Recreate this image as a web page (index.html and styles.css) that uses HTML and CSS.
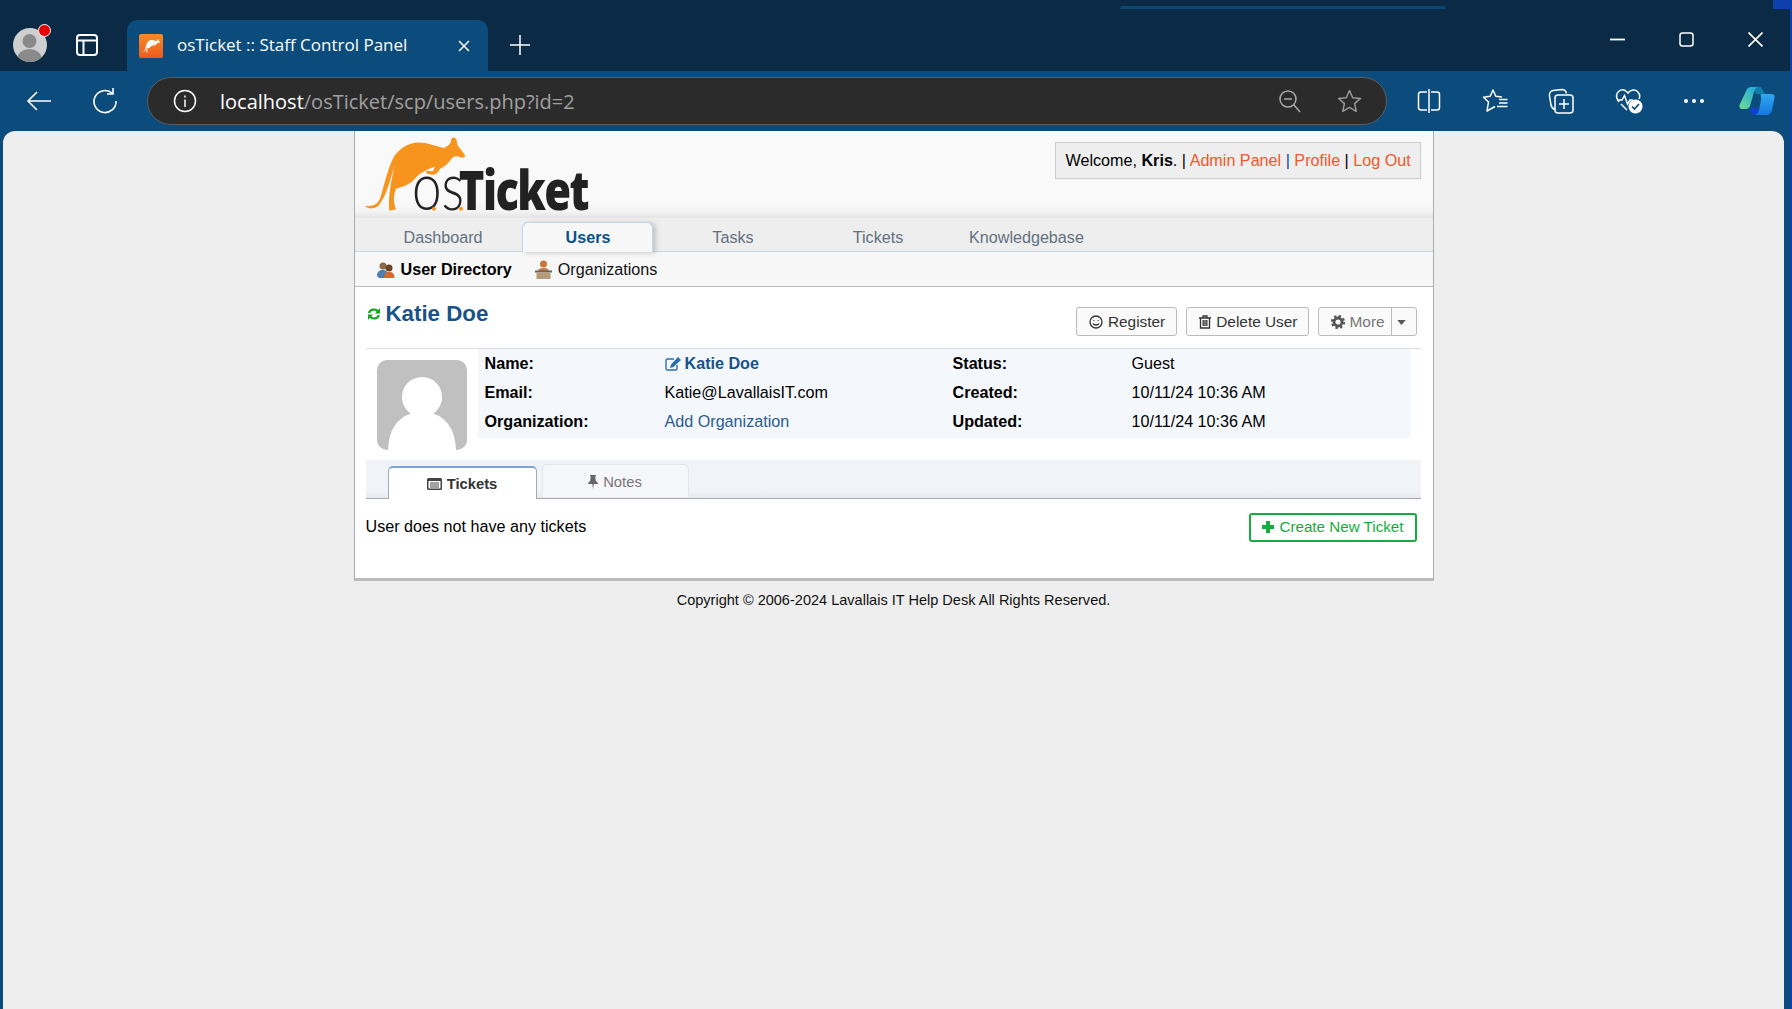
FILE: index.html
```html
<!DOCTYPE html>
<html lang="en">
<head>
<meta charset="utf-8">
<title>osTicket :: Staff Control Panel</title>
<link rel="stylesheet" href="styles.css">
</head>
<body>
<div class="desk-corner"></div>
<div class="window">
  <div class="tabstrip">
    <div class="sliver"></div>
    <div class="avatar-btn">
      <svg width="36" height="36" viewBox="0 0 36 36"><defs><clipPath id="pc"><circle cx="18" cy="18" r="17"/></clipPath></defs><circle cx="18" cy="18" r="17" fill="#cfcfcf"/><g clip-path="url(#pc)" fill="#8a8a8a"><circle cx="17.500" cy="14" r="7"/><ellipse cx="17.500" cy="31" rx="12" ry="9"/></g></svg>
      <span class="notify"></span>
    </div>
    <svg class="tabs-ico" width="22" height="22" viewBox="0 0 22 22" fill="none" stroke="#fff" stroke-width="2"><rect x="1" y="1" width="20" height="20" rx="3"/><path d="M1 6.500H21M7.500 6.500V21"/></svg>
    <div class="tab">
      <span class="favicon">
        <svg width="20" height="15" viewBox="0 0 330 245"><path fill="#fff" d="M15 222C35 224 52 218 60 200C70 170 78 130 92 95C105 60 130 38 165 32C195 28 225 42 252 48C262 42 268 38 272 32C272 22 276 14 284 17C290 20 291 28 292 38C300 50 310 60 316 72C312 78 304 78 296 74C290 72 282 72 276 78C268 92 255 104 240 110C234 122 228 128 215 128L198 124L200 116L218 118C222 112 224 108 224 104C200 112 175 125 165 140C150 158 125 165 108 170C100 190 100 210 108 232L88 236C84 200 92 150 104 100C92 135 82 190 55 222C40 232 25 232 15 222Z"/></svg>
      </span>
      <span class="tab-title">osTicket :: Staff Control Panel</span>
      <svg class="tab-close" width="12" height="12" viewBox="0 0 12 12" stroke="#fff" stroke-width="1.500"><path d="M1 1L11 11M11 1L1 11"/></svg>
    </div>
    <svg class="newtab" width="20" height="20" viewBox="0 0 20 20" stroke="#fff" stroke-width="1.500"><path d="M10 0V20M0 10H20"/></svg>
    <div class="winctrls">
      <svg width="15" height="15" viewBox="0 0 15 15" stroke="#fff" stroke-width="1.800"><path d="M0 7.500H15"/></svg>
      <svg width="15" height="15" viewBox="0 0 15 15" fill="none" stroke="#fff" stroke-width="1.500"><rect x="1" y="1" width="13" height="13" rx="2.500"/></svg>
      <svg width="15" height="15" viewBox="0 0 15 15" stroke="#fff" stroke-width="1.600"><path d="M.5 .5L14.500 14.500M14.500 .5L.5 14.500"/></svg>
    </div>
  </div>
  <div class="toolbar">
    <svg class="t-back" width="26" height="22" viewBox="0 0 26 22" fill="none" stroke="#fff" stroke-width="1.600"><path d="M25 11H2M11 2L2 11L11 20"/></svg>
    <svg class="t-reload" width="26" height="26" viewBox="0 0 26 26" fill="none" stroke="#fff" stroke-width="1.600"><path d="M20.500 5.500A11 11 0 1 0 24 13"/><path d="M21 0V6H15"/></svg>
    <div class="address">
      <svg class="a-info" width="24" height="24" viewBox="0 0 24 24" fill="none" stroke="#fff" stroke-width="1.500"><circle cx="12" cy="12" r="10.500"/><path d="M12 10.500V18M12 6.500V8.500"/></svg>
      <span class="url"><span class="url-host">localhost</span>/osTicket/scp/users.php?id=2</span>
      <svg class="a-zoom" width="22" height="23" viewBox="0 0 22 23" fill="none" stroke="#aaa" stroke-width="1.500"><circle cx="9" cy="9" r="8"/><path d="M5 9H13M15 15L21 22"/></svg>
      <svg class="a-star" width="25" height="24" viewBox="0 0 25 24" fill="none" stroke="#999" stroke-width="1.500" stroke-linejoin="round"><path d="M12.500 1.500L15.700 8.700L23.500 9.400L17.600 14.600L19.300 22.300L12.500 18.300L5.700 22.300L7.400 14.600L1.500 9.400L9.300 8.700Z"/></svg>
    </div>
    <div class="tools">
      <svg width="24" height="26" viewBox="0 0 24 26" fill="none" stroke="#fff" stroke-width="1.500"><path d="M10 4H4A2.500 2.500 0 0 0 1.500 6.500V19.500A2.500 2.500 0 0 0 4 22H10M14 4H20A2.500 2.500 0 0 1 22.500 6.500V19.500A2.500 2.500 0 0 1 20 22H14M12 1V25"/></svg>
      <svg width="26" height="26" viewBox="0 0 26 26" fill="none" stroke="#fff" stroke-width="1.500" stroke-linejoin="round"><path d="M20 9L13.800 8.300L11 2L8.200 8.300L1.500 9.200L6.500 14L5 23L13 18.500"/><path d="M17 11.500H25.500M17 15H25.500M15 18.500H25.500"/></svg>
      <svg width="26" height="26" viewBox="0 0 26 26" fill="none" stroke="#fff" stroke-width="1.500"><path d="M7 21.500C5 21 3.500 19.500 3 17L1.500 8C1 5 3 3 5 2.500L14 1.500C16.500 1.500 18 3 18.500 5.500"/><rect x="7" y="7" width="18" height="18" rx="3"/><path d="M16 11V21M11 16H21"/></svg>
      <svg width="28" height="26" viewBox="0 0 28 26"><path fill="none" stroke="#fff" stroke-width="1.500" d="M4 14C1 10 1 6 3.500 3.500C6.500 1 10 1.500 13 5C16 1.500 20 1 22.500 3.500C25 6 25 9 24 11M2 12H7L9.500 7.500L12.500 16L15 12H18M6 16L12 22"/><circle cx="20.500" cy="18.500" r="7" fill="#fff"/><path d="M17 18.500L19.500 21L24 16" fill="none" stroke="#0b4c7d" stroke-width="1.700"/></svg>
      <svg width="22" height="6" viewBox="0 0 22 6" fill="#fff"><circle cx="3" cy="3" r="2"/><circle cx="11" cy="3" r="2"/><circle cx="19" cy="3" r="2"/></svg>
    </div>
    <svg class="copilot" width="36" height="30" viewBox="0 0 36 30"><defs><linearGradient id="cg1" x1="0" y1="1" x2="1" y2="0"><stop offset="0" stop-color="#6fdc8c"/><stop offset="1" stop-color="#1aa3e8"/></linearGradient><linearGradient id="cg2" x1="0" y1="0" x2="0" y2="1"><stop offset="0" stop-color="#2fa8ef"/><stop offset="1" stop-color="#1576e0"/></linearGradient></defs><path fill="#0e7fa8" d="M13 1H22L26 8H17Z"/><path fill="url(#cg1)" d="M8 3C9 1.500 11 1 13 1H20C17 1 16 3 15 6L11 20C10.500 22.500 8 23 6 23H3C1 23 0 21 .5 19Z"/><path fill="#1340c8" d="M11 22H20L18 29H14C12 29 11 26 11 22Z"/><path fill="url(#cg2)" d="M22 8H32C35 8 36 10 35.500 12L33 24C32.500 27 30 29 27 29H15C18 29 19 27 20 24L22 14C22.500 11 21 9 22 8Z"/></svg>
  </div>
  <div class="viewport">
    <div class="page">
      <header class="head">
        <svg class="logo" width="240" height="100" viewBox="0 0 720 300" role="img" aria-label="osTicket">
          <path class="roo" d="M15 222C35 224 52 218 60 200C70 170 78 130 92 95C105 60 130 38 165 32C195 28 225 42 252 48C262 42 268 38 272 32C272 22 276 14 284 17C290 20 291 28 292 38C300 50 310 60 316 72C312 78 304 78 296 74C290 72 282 72 276 78C268 92 255 104 240 110C234 122 228 128 215 128L198 124L200 116L218 118C222 112 224 108 224 104C200 112 175 125 165 140C150 158 125 165 108 170C100 190 100 210 108 232L88 236C84 200 92 150 104 100C92 135 82 190 55 222C40 232 25 232 15 222Z"/>
          <text class="logo-text" x="156" y="234" textLength="528" lengthAdjust="spacingAndGlyphs"><tspan class="logo-os">os</tspan><tspan class="logo-ticket" dx="-20">Ticket</tspan></text>
          <circle class="roo" cx="222" cy="230" r="6"/><circle class="roo" cx="303" cy="230" r="6"/>
        </svg>
        <div class="welcome">Welcome, <b>Kris</b>. | <a class="lnk">Admin Panel</a> <span class="pipe">|</span> <a class="lnk">Profile</a> | <a class="lnk">Log Out</a></div>
      </header>
      <nav class="nav">
        <a class="nav-item">Dashboard</a>
        <a class="nav-item active">Users</a>
        <a class="nav-item">Tasks</a>
        <a class="nav-item">Tickets</a>
        <a class="nav-item">Knowledgebase</a>
      </nav>
      <div class="subnav">
        <a class="sub-item strong">
          <svg width="18" height="18" viewBox="0 0 18 18"><circle cx="6" cy="5" r="3.500" fill="#8a6a4a"/><path fill="#4d7fb5" d="M0 15C0 10 3 9 6 9C9 9 11 11 11 15L9 17H2Z"/><circle cx="12" cy="7" r="3.500" fill="#6a4424"/><path fill="#d9662a" d="M7 17C7 12 9 11 12 11C15 11 17.500 12 17.500 17Z"/></svg>
          User Directory</a>
        <a class="sub-item">
          <svg width="17" height="19" viewBox="0 0 17 19"><circle cx="8.500" cy="4" r="3.500" fill="#c8763a"/><path fill="#c8763a" d="M3 11C3 9 5 8 8.500 8C12 8 14 9 14 11Z"/><rect x="0" y="10.500" width="17" height="2" fill="#666"/><rect x="1.500" y="12.500" width="14" height="6.500" fill="#b59a7a"/></svg>
          Organizations</a>
      </div>
      <main class="content">
        <div class="title-row">
          <h2 class="title">
            <svg width="14" height="14" viewBox="0 0 14 14" fill="none" stroke="#17a51f" stroke-width="2.200"><path d="M2 6A5 4.500 0 0 1 11 4.500M12 8A5 4.500 0 0 1 3 9.500"/><path fill="#17a51f" stroke="none" d="M13 1V6.500H8ZM1 13V7.500H6Z"/></svg>
            <span>Katie Doe</span>
          </h2>
          <div class="actions">
            <a class="btn btn-reg">
              <svg width="14" height="14" viewBox="0 0 14 14" fill="none" stroke="#333" stroke-width="1.300"><circle cx="7" cy="7" r="6"/><path d="M4 8.500C5 10.500 9 10.500 10 8.500M4.800 5V5.800M9.200 5V5.800"/></svg>
              Register</a>
            <a class="btn">
              <svg width="12" height="14" viewBox="0 0 12 14" fill="none" stroke="#333" stroke-width="1.300"><path d="M0 3H12M4 3V1H8V3M1.500 3V13H10.500V3M4.200 5V11M6 5V11M7.800 5V11"/></svg>
              Delete User</a>
            <div class="btn split">
              <span class="split-main">
                <svg width="14" height="14" viewBox="0 0 14 14"><circle cx="7" cy="7" r="4" fill="none" stroke="#555" stroke-width="2.800"/><circle cx="7" cy="7" r="6" fill="none" stroke="#555" stroke-width="2.200" stroke-dasharray="2.400 2.300"/></svg>
                More</span>
              <span class="split-caret"><svg width="9" height="5" viewBox="0 0 10 6" fill="#555"><path d="M0 0H10L5 6Z"/></svg></span>
            </div>
          </div>
        </div>
        <section class="user-info">
          <div class="photo">
            <svg width="90" height="90" viewBox="0 0 90 90"><rect width="90" height="90" rx="10" fill="#c0c0c0"/><circle cx="45" cy="37" r="20" fill="#fff"/><path fill="#fff" d="M11 90C12 65 25 52 45 52C65 52 78 65 79 90Z"/></svg>
          </div>
          <div class="info">
            <b>Name:</b><a class="name-link"><svg width="16" height="14" viewBox="0 0 16 14" fill="none" stroke="#2b6fa8" stroke-width="1.400"><path d="M12 8V12A1.500 1.500 0 0 1 10.500 13H2.500A1.500 1.500 0 0 1 1 11.500V3.500A1.500 1.500 0 0 1 2.500 2H9"/><path fill="#2b6fa8" stroke="none" d="M13 0L16 3L8.500 10L5 11L6 7.500Z"/></svg> Katie Doe</a><b>Status:</b><span>Guest</span>
            <b>Email:</b><span>Katie@LavallaisIT.com</span><b>Created:</b><span>10/11/24 10:36 AM</span>
            <b>Organization:</b><a class="org-link">Add Organization</a><b>Updated:</b><span>10/11/24 10:36 AM</span>
          </div>
        </section>
        <div class="tabs">
          <a class="ctab active">
            <svg width="15" height="12" viewBox="0 0 15 12"><rect width="15" height="12" rx="1.500" fill="#444"/><path fill="#fff" d="M1.500 3H13.500V10.500H1.500Z"/><path stroke="#444" d="M3 5H12M3 7H12M3 9H12"/></svg>
            Tickets</a>
          <a class="ctab">
            <svg width="10" height="14" viewBox="0 0 10 14" fill="#666"><path d="M2 0H8V1.200H7.200L7.800 6C9 6.800 10 7.800 10 9H5.700L5 14L4.300 9H0C0 7.800 1 6.800 2.200 6L2.800 1.200H2Z"/></svg>
            Notes</a>
        </div>
        <div class="tab-body">
          <span class="empty-msg">User does not have any tickets</span>
          <a class="btn-green">
            <svg width="12" height="12" viewBox="0 0 12 12" fill="#16ad40"><path d="M4 0H8V4H12V8H8V12H4V8H0V4H4Z"/></svg>
            Create New Ticket</a>
        </div>
      </main>
    </div>
    <footer class="footer">Copyright © 2006-2024 Lavallais IT Help Desk All Rights Reserved.</footer>
  </div>
</div>
</body>
</html>
```

FILE: styles.css
```css
* { box-sizing: border-box; }
html, body { margin: 0; height: 100%; overflow: hidden; }
body { background: #0e3fae; font-family: "Liberation Sans", Arial, sans-serif; font-size: 16.150px; color: #000; }
svg { display: block; flex: none; }
a { text-decoration: none; }

.desk-corner { position: absolute; right: 0; top: 0; width: 19px; height: 9px; background: #0e3fae; z-index: 1; }
.window { width: 1790px; height: 1009px; display: flex; flex-direction: column; background: #0b4c7d; }

/* Browser tab strip */
.tabstrip { position: relative; height: 71px; flex: none; background: #0a2a46; display: flex; align-items: flex-end; }
.sliver { position: absolute; left: 1120px; top: 6px; width: 326px; height: 3px; background: #0c4673; border-radius: 3px 3px 0 0; }
.avatar-btn { position: relative; width: 36px; height: 36px; margin: 0 0 8px 12px; }
.notify { position: absolute; right: -3px; top: -3px; width: 13px; height: 13px; border-radius: 50%; background: #e60000; border: 1.500px solid #fff; }
.tabs-ico { margin: 0 29px 15px 28px; }
.tab { width: 361px; height: 51px; background: #0b4c7d; border-radius: 10px 10px 0 0; display: flex; align-items: center; padding: 0 16px 0 12px; color: #fff; }
.favicon { width: 24px; height: 24px; border-radius: 2px; background: linear-gradient(#f98a22, #ee5a20); display: flex; align-items: center; justify-content: center; }
.tab-title { font-family: "Open Sans", "Noto Sans", sans-serif; font-size: 17px; line-height: 22px; margin: 0 0 2px 14px; white-space: nowrap; width: 281px; }
.newtab { margin: 0 0 16px 22px; }
.winctrls { margin-left: auto; display: flex; gap: 54px; padding-right: 27px; margin-bottom: 24px; }

/* Browser toolbar */
.toolbar { height: 60px; flex: none; background: #0b4c7d; display: flex; align-items: center; }
.t-back { margin-left: 26px; }
.t-reload { margin-left: 40px; }
.address { width: 1240px; height: 48px; margin-left: 29px; background: #2b2b2b; border: 1.500px solid #5c5c5c; border-radius: 24px; display: flex; align-items: center; padding: 0 24px 0 25px; }
.url { font-family: "Open Sans", "Noto Sans", sans-serif; font-size: 20px; color: #a0a0a0; margin-left: 23px; white-space: nowrap; }
.url-host { color: #fff; }
.a-zoom { margin-left: auto; }
.a-star { margin-left: 36px; }
.tools { display: flex; align-items: center; justify-content: space-between; width: 288px; margin-left: 30px; }
.copilot { margin-left: 34px; }

/* Viewport */
.viewport { flex: 1; margin: 0 6px 0 3px; background: #eeeeee; border-radius: 12px 12px 0 0; display: flex; flex-direction: column; }

.page { width: 1080px; margin: 0 auto; background: #fff; border-left: 1px solid #aaa; border-right: 1px solid #aaa; border-bottom: 3px solid #bbb; }

.head { height: 87px; background: linear-gradient(#f9f9f9 80%, #f4f4f4 92%, #e4e4e4); display: flex; justify-content: space-between; align-items: flex-start; }
.logo { margin: 1px 0 0 5px; }
.logo-text { fill: #222; }
.logo-os { font-family: "Lato", sans-serif; font-weight: 300; font-size: 200px; }
.logo-ticket { font-family: "Open Sans", sans-serif; font-weight: 800; font-size: 164px; letter-spacing: -6px; }
.roo { fill: #f7941e; }
.welcome { margin: 11px 12px 0 0; width: 366px; height: 37px; background: #eee; border: 1px solid #ccc; padding: 0 0 0 10px; line-height: 35px; white-space: nowrap; }
.lnk { color: #f4572a; }
.pipe { color: #0a4c8a; }

.nav { height: 34px; background: #eee; border-bottom: 1px solid #c8d8e6; padding-left: 22px; display: flex; align-items: flex-end; }
.nav-item { min-width: 131px; padding: 0 10.500px 0 12.500px; margin-right: 14px; height: 30px; line-height: 33px; text-align: center; color: #64707e; }
.nav-item.active { position: relative; top: 1px; background: #f7f7f7; color: #0a5288; font-weight: 700; border: 1px solid #bcd7ee; border-bottom: 0; border-radius: 6px 6px 0 0; box-shadow: 3px 1px 5px rgba(0,0,0,.18); line-height: 29px; }

.subnav { height: 35px; background: #f7f7f7; border-bottom: 1px solid #bbb; padding: 1px 0 0 22px; display: flex; align-items: center; gap: 23px; }
.sub-item { display: flex; align-items: center; gap: 6px; color: #111; }
.sub-item.strong { font-weight: 700; color: #000; }

.content { padding: 0 12px 0 11px; height: 291px; }
.title-row { height: 62px; border-bottom: 1px solid #ddd; display: flex; justify-content: space-between; padding: 20px 4px 0 1px; }
.title { margin: 1px 0 0; display: flex; align-items: center; gap: 5px; height: 12px; font-size: 22.300px; font-weight: 700; color: #17528a; }
.actions { display: flex; gap: 9px; }
.btn { height: 29px; padding: 0 10px 0 12px; display: flex; align-items: center; gap: 5px; background: #fafafa; border: 1px solid #bbb; border-radius: 3px; color: #333; font-size: 15.400px; white-space: nowrap; }
.btn-reg { padding-right: 11px; }
.btn.split { padding: 0; gap: 0; width: 99px; color: #777; }
.split-main { flex: 1; display: flex; align-items: center; gap: 5px; padding-left: 12px; height: 100%; }
.split-caret { width: 25px; height: 100%; border-left: 1px solid #bbb; display: flex; align-items: center; justify-content: center; padding: 2px 5px 0 0; }

.user-info { height: 111px; display: flex; align-items: flex-start; }
.photo { margin: 11px 11px 0 11px; }
.info { width: 933px; height: 89px; background: #f4f8fd; display: grid; grid-template-columns: 180px 288px 179px 1fr; grid-auto-rows: 29px; padding-left: 7px; line-height: 29px; white-space: nowrap; }
.name-link { display: flex; align-items: center; gap: 4px; color: #17528a; font-weight: 700; }
.org-link { color: #2b5c94; }

.tabs { height: 39px; background: linear-gradient(#f0f4f8 80%, #e6eaee); border-bottom: 1px solid #aaa; padding-left: 22px; display: flex; align-items: flex-end; gap: 5px; font-size: 14.770px; }
.ctab { width: 147px; height: 33px; margin-bottom: 1px; background: #f5f6f9; border: 1px solid #e4e6ea; border-bottom: 0; border-radius: 5px 5px 0 0; display: flex; align-items: center; justify-content: center; gap: 5px; color: #777; padding-top: 1px; }
.ctab.active { width: 149px; margin-bottom: -1px; background: #fff; border: 1px solid #aaa; border-top: 2px solid #7ba5d6; border-bottom: 0; color: #333; font-weight: 700; padding: 1px 0 0; }

.tab-body { display: flex; justify-content: space-between; align-items: center; padding: 14px 4px 0 0; }
.empty-msg { padding-bottom: 2px; }
.btn-green { width: 168px; height: 29px; border: 2px solid #16ad40; border-radius: 3px; display: flex; align-items: center; justify-content: center; gap: 5px; padding: 0 0 2px 1px; color: #16ad40; font-size: 15.200px; white-space: nowrap; }

.footer { text-align: center; font-size: 14.540px; margin-top: 10px; line-height: 18px; color: #111; }
```
